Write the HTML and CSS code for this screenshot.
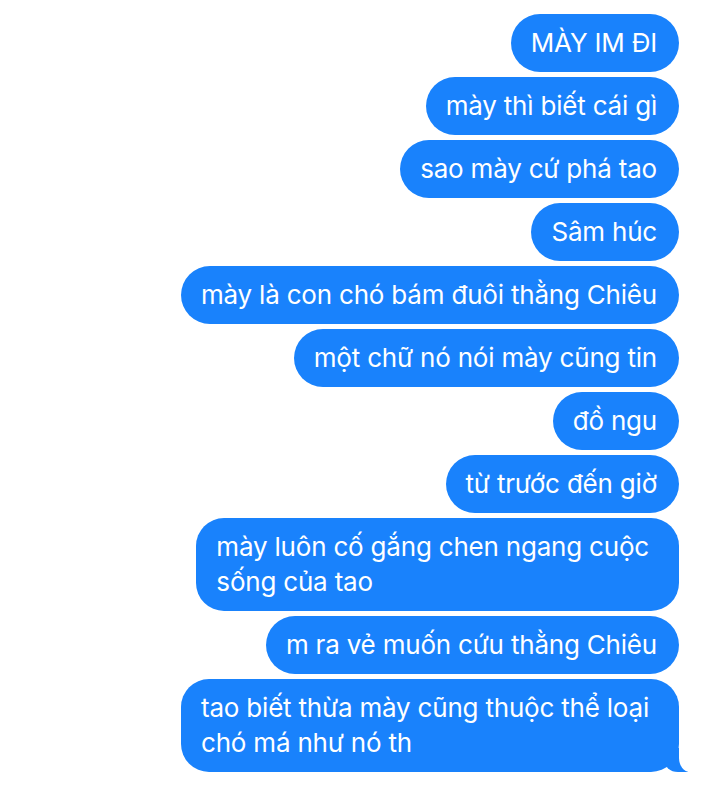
FILE: index.html
```html
<!DOCTYPE html>
<html lang="vi">
<head>
  <meta charset="UTF-8" />
  <meta name="viewport" content="width=device-width, initial-scale=1" />
  <title>Tin nhắn</title>
  <link rel="stylesheet" href="styles.css">
</head>
<body>
  <div class="thread">
    <div class="bubble">MÀY IM ĐI</div>
    <div class="bubble">mày thì biết cái gì</div>
    <div class="bubble">sao mày cứ phá tao</div>
    <div class="bubble">Sâm húc</div>
    <div class="bubble">mày là con chó bám đuôi thằng Chiêu</div>
    <div class="bubble">một chữ nó nói mày cũng tin</div>
    <div class="bubble">đồ ngu</div>
    <div class="bubble">từ trước đến giờ</div>
    <div class="bubble multi">mày luôn cố gắng chen ngang cuộc<br>sống của tao</div>
    <div class="bubble">m ra vẻ muốn cứu thằng Chiêu</div>
    <div class="bubble multi tail">tao biết thừa mày cũng thuộc thể loại<br>chó má như nó th</div>
  </div>
</body>
</html>
```

FILE: styles.css
```css
/* Basic Reset */
* {
  box-sizing: border-box;
  margin: 0;
  padding: 0;
}
body {
  background-color: #fff;
  font-family: Inter, "Noto Sans", sans-serif;
}
.thread {
  display: flex;
  flex-direction: column;
  align-items: flex-end;
  gap: 5px;
  padding: 14px 41px 0 0;
}
.bubble {
  position: relative;
  background-color: #1982fc;
  color: #fff;
  font-size: 26px;
  letter-spacing: -0.2px;
  line-height: 34px;
  padding: 12px 22px 12px 20px;
  border-radius: 29px;
  white-space: nowrap;
}
/* wrapped messages keep some slack on the right */
.bubble.multi {
  line-height: 34.5px;
  padding-right: 30px;
  border-radius: 28px;
}
/* tail on the last message */
.bubble.tail::before {
  content: "";
  position: absolute;
  bottom: 0;
  right: -9px;
  width: 24px;
  height: 24px;
  background-color: #1982fc;
  border-bottom-left-radius: 14px 12px;
}
.bubble.tail::after {
  content: "";
  position: absolute;
  bottom: 0;
  right: -12px;
  width: 12px;
  height: 24px;
  background-color: #fff;
  border-bottom-left-radius: 11px 14px;
}
```
